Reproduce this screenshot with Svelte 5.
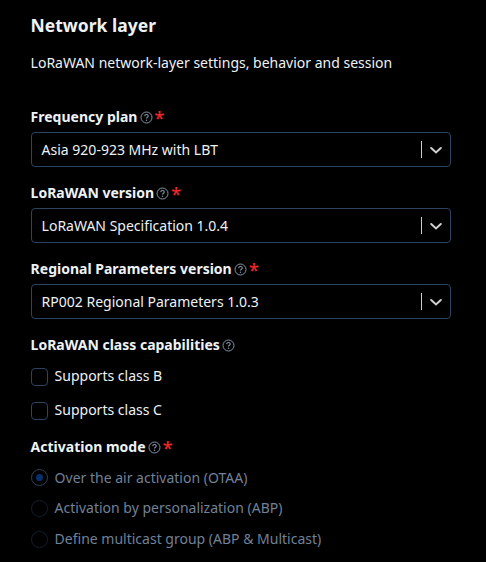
<script>
  const selects = [
    { label: 'Frequency plan', value: 'Asia 920-923 MHz with LBT' },
    { label: 'LoRaWAN version', value: 'LoRaWAN Specification 1.0.4' },
    { label: 'Regional Parameters version', value: 'RP002 Regional Parameters 1.0.3' },
  ];
  const classes = ['Supports class B', 'Supports class C'];
  const modes = [
    'Over the air activation (OTAA)',
    'Activation by personalization (ABP)',
    'Define multicast group (ABP & Multicast)',
  ];
</script>

{#snippet label(text, required)}
  <div class="label">
    <span>{text}</span>
    <svg class="help" width="13" height="13" viewBox="0 0 13 13" fill="none">
      <circle cx="6.5" cy="6.5" r="5.5" stroke="#8494ab" />
      <path d="M4.7 5.1C4.8 3 8.3 3.1 8.3 5.1C8.3 6.3 6.5 6.3 6.5 7.6" stroke="#8494ab" stroke-width="1.1" />
      <circle cx="6.5" cy="9.3" r=".75" fill="#8494ab" />
    </svg>
    {#if required}<span class="star">*</span>{/if}
  </div>
{/snippet}

<main>
  <h1>Network layer</h1>
  <p>LoRaWAN network-layer settings, behavior and session</p>

  {#each selects as s}
    <section class="field">
      {@render label(s.label, true)}
      <div class="select">
        <span class="value">{s.value}</span>
        <span class="sep"></span>
        <svg class="chevron" width="12" height="8" viewBox="0 0 12 8" fill="none">
          <path d="M1.2 2L6 6.5L10.8 2" stroke="#d0d0d0" stroke-width="2" stroke-linecap="round" />
        </svg>
      </div>
    </section>
  {/each}

  <section class="checks">
    {@render label('LoRaWAN class capabilities', false)}
    {#each classes as c}
      <div class="check"><span class="box"></span><span class="text">{c}</span></div>
    {/each}
  </section>

  <section class="radios">
    {@render label('Activation mode', true)}
    {#each modes as m, i}
      <div class="radio" class:selected={i === 0}>
        <span class="ring"></span><span class="text">{m}</span>
      </div>
    {/each}
  </section>
</main>

<style>
  :global(body) {
    background: #000;
  }
  main {
    box-sizing: border-box;
    width: 486px;
    height: 562px;
    padding: 10px 35.4px 0 30.6px;
    overflow: hidden;
    background: #000;
    color: #edf2f7;
    font: 14px/20px 'Noto Sans', sans-serif;
    white-space: nowrap;
  }
  h1 {
    margin: 0;
    font-size: 17.5px;
    line-height: 30px;
    font-weight: 700;
  }
  p {
    margin: 13px 0 34px;
  }
  .label {
    display: flex;
    align-items: center;
    height: 20px;
    font-weight: 700;
  }
  .help {
    margin: 1px 0 0 2.2px;
  }
  .star {
    margin: 1px 0 0 2px;
    color: #f5282c;
    font-size: 18px;
    font-weight: 400;
    -webkit-text-stroke: 0.2px #f5282c;
  }
  .field {
    height: 76px;
  }
  .select {
    box-sizing: border-box;
    display: flex;
    align-items: center;
    height: 35px;
    margin-top: 5px;
    padding: 0 8px 0 10px;
    border: 1px solid #2d4460;
    border-radius: 4px;
  }
  .value {
    flex: 1;
  }
  .sep {
    width: 1px;
    height: 17px;
    margin-right: 8px;
    background: #ccc;
  }
  .check {
    display: flex;
    align-items: center;
    gap: 7px;
    height: 18px;
    margin-top: 13px;
  }
  .check + .check {
    margin-top: 16px;
  }
  .check .text {
    margin-bottom: 2px;
  }
  .box {
    box-sizing: border-box;
    width: 17px;
    height: 18px;
    border: 1px solid #2d4460;
    border-radius: 4px;
  }
  .radios {
    margin-top: 17px;
  }
  .radio {
    display: flex;
    align-items: center;
    gap: 7px;
    height: 18px;
    margin-top: 12.7px;
    color: #718198;
  }
  .radio .text {
    margin-bottom: 0.4px;
  }
  .label + .radio {
    margin-top: 11.9px;
  }
  .ring {
    box-sizing: border-box;
    display: grid;
    place-items: center;
    width: 17px;
    height: 17px;
    border: 1px solid #14202c;
    border-radius: 50%;
  }
  .selected .ring {
    border-color: #344250;
  }
  .selected .ring::after {
    content: '';
    width: 7px;
    height: 7px;
    border-radius: 50%;
    background: #06316d;
  }
</style>
